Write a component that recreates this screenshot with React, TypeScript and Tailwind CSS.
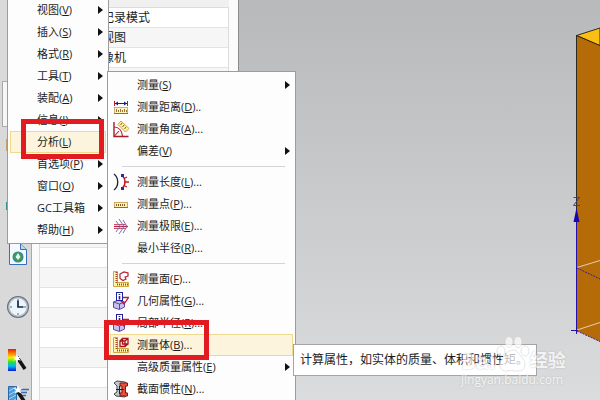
import type { ReactNode } from 'react';
import { clsx } from 'clsx';

interface MenuEntry {
  label: string;
  accessKey?: string;
  suffix?: string;
  submenu?: boolean;
  active?: boolean;
  icon?: ReactNode;
}

/* ── Submenu icons ─────────────────────────────────────────── */

function Icon({ children }: { children: ReactNode }) {
  return (
    <svg width="16" height="18" viewBox="0 0 16 18" fill="none" aria-hidden="true">
      {children}
    </svg>
  );
}

const distanceIcon = (
  <Icon>
    <path d="M1.5 3v5M14.5 3v5" stroke="#b3202c" />
    <path d="M2 5.5h12" stroke="#20207c" />
    <path d="M5 3.5l-3 2 3 2zM11 3.5l3 2-3 2z" fill="#20207c" />
    <rect x="1.5" y="9.5" width="13" height="6" fill="#fff6b8" stroke="#d0b070" />
    <path d="M1 15.5h14" stroke="#a06a28" />
    <path d="M3.5 11v3M5.5 12v2M7.5 11v3M9.5 12v2M11.5 11v3M13.5 12v2" stroke="#9a7238" />
  </Icon>
);

const angleIcon = (
  <Icon>
    <path d="M1 2v14.5h14.5" stroke="#a81c28" strokeWidth="1.4" />
    <path d="M1 7c5 0 8 4 8.5 9M1 16.5L6 11" stroke="#b3202c" strokeWidth="1.1" />
    <path d="M8 1l8 7.5-3.5 3.5L5 4.500z" fill="#fff3a0" stroke="#c9a24a" />
    <path d="M9 3L7.5 5M11 5L9.5 7M13 7l-1.500 2" stroke="#8a5a20" />
  </Icon>
);

const lengthIcon = (
  <Icon>
    <path d="M1 1c5 4 5 12 0 16" stroke="#20203c" strokeWidth="1.3" />
    <path d="M9 2.5c4 3.5 4 9.5 0 13" stroke="#c01c28" strokeWidth="1.4" />
    <path d="M11 9h5M11 5.5l3-1.5M11 12.5l3 1.5" stroke="#c01c28" strokeWidth="1.3" />
    <path d="M8 1h3v3H8zM8 14h3v3H8z" fill="#2a2aa0" />
  </Icon>
);

const pointIcon = (
  <Icon>
    <rect x="1.5" y="7.5" width="13" height="5" fill="#fff3b0" stroke="#d0a860" />
    <path d="M1 12.5h14" stroke="#a8661c" />
    <path d="M3.5 9v2M5.5 9v2M7.5 9v2M9.5 9v2M11.5 9v2" stroke="#8a5a20" />
  </Icon>
);

const extremeIcon = (
  <Icon>
    <path d="M1 7.5h12M1 11.5h12" stroke="#d05068" />
    <path d="M1 9.5h14" stroke="#c02038" strokeWidth="1.3" />
    <path d="M3 4l4 5.5L3 15M6 2l5 7.5L6 17M10 3l4 6.5-4 6.5" stroke="#7474b4" />
  </Icon>
);

const ruler = (
  <>
    <path d="M.5 1.5h4v11h11v4H.5z" fill="#fff4b0" stroke="#d0a840" />
    <path d="M3.5 2v11M4 14.5h11" stroke="#a04a28" strokeDasharray="1 1" strokeWidth="2" />
  </>
);

const faceIcon = (
  <Icon>
    {ruler}
    <path d="M7 4l4-2 4 1v3l-3 1 1 2-3 1.5-3-2z" fill="#fff" stroke="#b3202c" strokeWidth="1.2" />
  </Icon>
);

const geometryIcon = (
  <Icon>
    <path d="M.5 10l5-2 6 2v5l-5 2.5-6-2z" fill="#c8c0f0" stroke="#5a4a9c" />
    <path d="M.5 10l6 2 5-2M6.5 12v5" stroke="#5a4a9c" />
    <path d="M9 5.5h6.5L11 12 8 9" stroke="#c01c38" strokeWidth="1.3" />
    <rect x="3.5" y=".5" width="6" height="8" fill="#fff" stroke="#20209c" />
    <path d="M6.5 2v1M6.5 4v3.5" stroke="#20209c" strokeWidth="1.6" />
  </Icon>
);

const bodyIcon = (
  <Icon>
    {ruler}
    <path
      d="M7 5h5v5.5H7zM9.5 2.5H15V8H9.5zM7 5l2.5-2.5M12 10.5L15 8M12 5l3-2.5"
      stroke="#a81420"
      strokeWidth="1.3"
    />
  </Icon>
);

const sectionIcon = (
  <Icon>
    <path d="M1 3l3-2 8 1 3 2-3 2v6l3 2-3 3-9-1-2-2 3-2V6z" fill="#c3c8ce" stroke="#404850" />
    <path d="M7 3h7.5v3h-2v7h2v3H7v-3h2V6H7z" fill="#e8503c" stroke="#801810" />
    <path d="M3 9.5h8M6.5 6v8" stroke="#202020" />
  </Icon>
);

/* ── Menu contents ─────────────────────────────────────────── */

const mainMenu: MenuEntry[] = [
  { label: '视图', accessKey: 'V', submenu: true },
  { label: '插入', accessKey: 'S', submenu: true },
  { label: '格式', accessKey: 'R', submenu: true },
  { label: '工具', accessKey: 'T', submenu: true },
  { label: '装配', accessKey: 'A', submenu: true },
  { label: '信息', accessKey: 'I', submenu: true },
  { label: '分析', accessKey: 'L', active: true },
  { label: '首选项', accessKey: 'P', submenu: true },
  { label: '窗口', accessKey: 'O', submenu: true },
  { label: 'GC工具箱', submenu: true },
  { label: '帮助', accessKey: 'H', submenu: true },
];

const analysisMenu: MenuEntry[][] = [
  [
    { label: '测量', accessKey: 'S', submenu: true },
    { label: '测量距离', accessKey: 'D', suffix: '..', icon: distanceIcon },
    { label: '测量角度', accessKey: 'A', suffix: '...', icon: angleIcon },
    { label: '偏差', accessKey: 'V', submenu: true },
  ],
  [
    { label: '测量长度', accessKey: 'L', suffix: '...', icon: lengthIcon },
    { label: '测量点', accessKey: 'P', suffix: '...', icon: pointIcon },
    { label: '测量极限', accessKey: 'E', suffix: '...', icon: extremeIcon },
    { label: '最小半径', accessKey: 'R', suffix: '...' },
  ],
  [
    { label: '测量面', accessKey: 'F', suffix: '...', icon: faceIcon },
    { label: '几何属性', accessKey: 'G', suffix: '...', icon: geometryIcon },
    { label: '局部半径', accessKey: 'R', suffix: '...', icon: geometryIcon },
    { label: '测量体', accessKey: 'B', suffix: '...', icon: bodyIcon, active: true },
    { label: '高级质量属性', accessKey: 'E', submenu: true },
    { label: '截面惯性', accessKey: 'N', suffix: '...', icon: sectionIcon },
  ],
];

/* Navigator rows, top to bottom; most of them are empty */
const navigatorRows = ['记录模式', '视图', '像机', ...Array<string>(17).fill('')];

function MenuItem({ item }: { item: MenuEntry }) {
  return (
    <button
      type="button"
      role="menuitem"
      className={clsx(
        'flex h-[22px] w-full items-center border text-left text-[11px] leading-4 whitespace-nowrap text-[#1c1c1c]',
        item.active ? 'border-[#efd98c] bg-[#fcf4dc]' : 'border-transparent',
      )}
    >
      <span className="flex w-[26px] shrink-0 items-center pl-[2px]">{item.icon}</span>
      <span className="flex-1">
        {item.label}
        {item.accessKey && (
          <>
            (<u>{item.accessKey}</u>)
          </>
        )}
        {item.suffix}
      </span>
      {item.submenu && (
        <svg width="5" height="8" viewBox="0 0 5 8" className="mr-[2px] shrink-0" aria-hidden="true">
          <path d="M0 0l5 4-5 4z" fill="#111" />
        </svg>
      )}
    </button>
  );
}

/* ── Left resource bar ─────────────────────────────────────── */

function ResourceBar() {
  return (
    <nav className="flex w-8 shrink-0 flex-col items-end border-r border-[#a9a9a9] bg-[#d9d9d9] pr-px">
      {/* Tabs that peek out beside the menu */}
      <div className="mt-[81px] flex w-full flex-col pl-[2px]">
        <div className="h-[46px] border border-[#a9a9a9] bg-[#f6f6f6]" />
        <div className="mt-3 ml-1 h-3 w-3 bg-[#c8a070]" />
        <div className="mt-[51px] ml-1 h-2 w-3 bg-[#3c8c94]" />
      </div>
      <div className="mt-8 flex flex-col gap-[29px]">
        <button type="button" aria-label="浏览器">
          <svg width="24" height="24" viewBox="0 0 24 24">
            <path d="M3.5 1.5h11l6 6v15h-17z" fill="#f4faff" stroke="#3a6fb8" />
            <path d="M14.5 1.5v6h6" fill="#bcd6f2" stroke="#3a6fb8" />
            <circle cx="12" cy="15" r="5.5" fill="#2c7eb4" />
            <path d="M7 14c2-5 8-5 10 0 0 4-3 6-5 6s-5-2-5-6z" fill="#3d9a5c" />
            <path d="M12 11l2.5 4-2.5 3-2.5-3z" fill="#e4f6ec" />
          </svg>
        </button>
        <button type="button" aria-label="历史记录">
          <svg width="24" height="24" viewBox="0 0 24 24">
            <circle cx="12" cy="12" r="11" fill="#66707c" />
            <circle cx="12" cy="12" r="10" fill="#b4bec8" />
            <circle cx="12" cy="12" r="8.500" fill="#ecf4fc" />
            <path d="M12 4v2M12 18v2M4 12h2M18 12h2" stroke="#5a6878" />
            <path d="M12 5.5V12h5.5" fill="none" stroke="#15254a" strokeWidth="1.7" />
          </svg>
        </button>
        <button type="button" aria-label="系统材料">
          <svg width="24" height="24" viewBox="0 0 24 24">
            <defs>
              <linearGradient id="spectrum" x1="0" y1="0" x2="0" y2="1">
                <stop offset="0" stopColor="#e81c10" />
                <stop offset=".25" stopColor="#ff9c00" />
                <stop offset=".4" stopColor="#f8f000" />
                <stop offset=".6" stopColor="#20e040" />
                <stop offset=".78" stopColor="#00b8f8" />
                <stop offset="1" stopColor="#1018c8" />
              </linearGradient>
            </defs>
            <path d="M2 1h8v22H2z" fill="url(#spectrum)" />
            <path d="M11 9l8 12" stroke="#141414" strokeWidth="3.5" />
            <path d="M11 6l1 3 3-1-2 2.500 2 2-3-.5-1 3-1-3-3 .5 2-2-2-2.500 3 1z" fill="#fff" />
          </svg>
        </button>
      </div>
      <button type="button" aria-label="加工向导" className="mt-3">
        <svg width="24" height="24" viewBox="0 0 24 24">
          <path d="M2.5 2.5h8V24h-8z" fill="#4c9cd8" stroke="#2868a8" />
          <path d="M3 7l7-4M3 11l7-4M3 15l7-4M3 19l7-4" stroke="#a4d4f4" />
          <path d="M11 5.5h12M12 8.5h9M13 11.5h7" stroke="#3c6cac" strokeWidth="1.5" />
          <path d="M12 8l8 12" stroke="#141414" strokeWidth="3.5" />
          <path d="M12 1l1 3.500 3.500-.5-2.500 2.500 1.500 3-3.500-1.500-3.500 1.500 1.500-3L7.500 4l3.500.5z" fill="#fff" />
        </svg>
      </button>
    </nav>
  );
}

/* ── Navigator panel behind the menus ──────────────────────── */

function Navigator() {
  return (
    <aside className="w-[207px] shrink-0 border-r border-[#8c8c8c] bg-[#fbfbfb] pr-[9px] pl-[7px]">
      <div className="h-2 border-b border-[#dcdcdc] bg-[#f0f0f0]" />
      <ul className="border-x border-[#dcdcdc]">
        {navigatorRows.map((row, i) => (
          <li
            key={i}
            className="h-5 border-b border-[#e4e4e4] pl-[62px] text-[12px] leading-5 text-[#1c1c1c] odd:bg-white even:bg-[#f6f6f6]"
          >
            {row}
          </li>
        ))}
      </ul>
    </aside>
  );
}

/* ── Graphics window with the solid block ──────────────────── */

function Viewport() {
  return (
    <main className="flex flex-1 justify-end bg-linear-to-b from-[#b8b9bb] to-[#dbdcdd]">
      <svg width="32" height="400" viewBox="0 0 32 400" fill="none" className="shrink-0">
        <path d="M8.5 35.5L32 28v18z" fill="#fbbe12" stroke="#3a2a10" />
        <path d="M8.5 35.5L32 45.5v296l-23.500-11z" fill="#b56b08" />
        <path d="M8.5 35.5L32 45.5" stroke="#2a2010" />
        <path d="M8.5 35v180" stroke="#2a2a20" />
        <path d="M9 267.500l23-7M9 330l23-7.500" stroke="#e8cdb0" />
        <path d="M9 268l23 11M9 331l23 10.500" stroke="#3c1c90" strokeDasharray="2 1" />
        <path d="M8.5 215v119M3 330.500h7" stroke="#2410a8" />
        <path d="M8.5 208l3 14h-6z" fill="#1408b4" />
        <path d="M5.5 197.500h6l-6 8h6.500" stroke="#4a34b4" />
      </svg>
    </main>
  );
}

function Watermark() {
  return (
    <div className="absolute top-[335px] left-[461px] text-white opacity-70 [text-shadow:0_0_2px_#a8a8a8]">
      <div className="flex h-[37px] items-end">
        <span className="text-[22px] leading-6 font-bold">Bai</span>
        <svg width="34" height="36" viewBox="0 0 34 36" fill="#fff" stroke="#d0d0d0" strokeWidth=".8">
          <ellipse cx="13" cy="6" rx="4" ry="5.500" />
          <ellipse cx="22" cy="6" rx="4" ry="5.500" />
          <ellipse cx="5" cy="15" rx="4" ry="5" />
          <ellipse cx="29" cy="15" rx="4" ry="5" />
          <path d="M17 14c5 0 7 6 10 9s3 12-4 12-9-1-12 0-9-2-7-8 8-13 13-13z" />
        </svg>
        <span className="text-[18px] leading-6 font-bold">经验</span>
      </div>
      <div className="text-[12px] leading-4">jingyan.baidu.com</div>
    </div>
  );
}

export default function App() {
  return (
    <div className="relative flex h-screen min-h-[400px] overflow-hidden font-['Open_Sans','Noto_Sans_CJK_SC',sans-serif]">
      <ResourceBar />
      <Navigator />
      <Viewport />

      {/* Main menu */}
      <div
        role="menu"
        className="absolute -top-[2px] left-[7px] w-[102px] border border-[#9c9c9c] bg-[#fdfdfd] px-[2px] pb-[2px]"
      >
        {mainMenu.map(item => (
          <MenuItem key={item.label} item={item} />
        ))}
      </div>

      {/* 分析 submenu */}
      <div
        role="menu"
        className="absolute top-[71px] left-[107px] w-[189px] border border-[#9c9c9c] bg-[#fdfdfd] p-[2px]"
      >
        {analysisMenu.map((group, i) => (
          <div key={i} role="group">
            {i > 0 && <hr className="my-1 mr-2 ml-3 border-[#d4d4d4]" />}
            {group.map(item => (
              <MenuItem key={item.label} item={item} />
            ))}
          </div>
        ))}
      </div>

      <div
        role="tooltip"
        className="absolute top-[344px] left-[293px] border border-[#a4a4a4] bg-white py-[5px] pr-2 pl-[6px] text-[12px] leading-5 whitespace-nowrap text-[#1c1c1c]"
      >
        计算属性，如实体的质量、体积和惯性矩。
      </div>

      {/* Callout frames */}
      <div className="pointer-events-none absolute top-[119px] left-[21px] h-10 w-[83px] border-5 border-[#e21a22]" />
      <div className="pointer-events-none absolute top-[320px] left-[104px] h-10 w-[105px] border-5 border-[#e21a22]" />

      <Watermark />
    </div>
  );
}
